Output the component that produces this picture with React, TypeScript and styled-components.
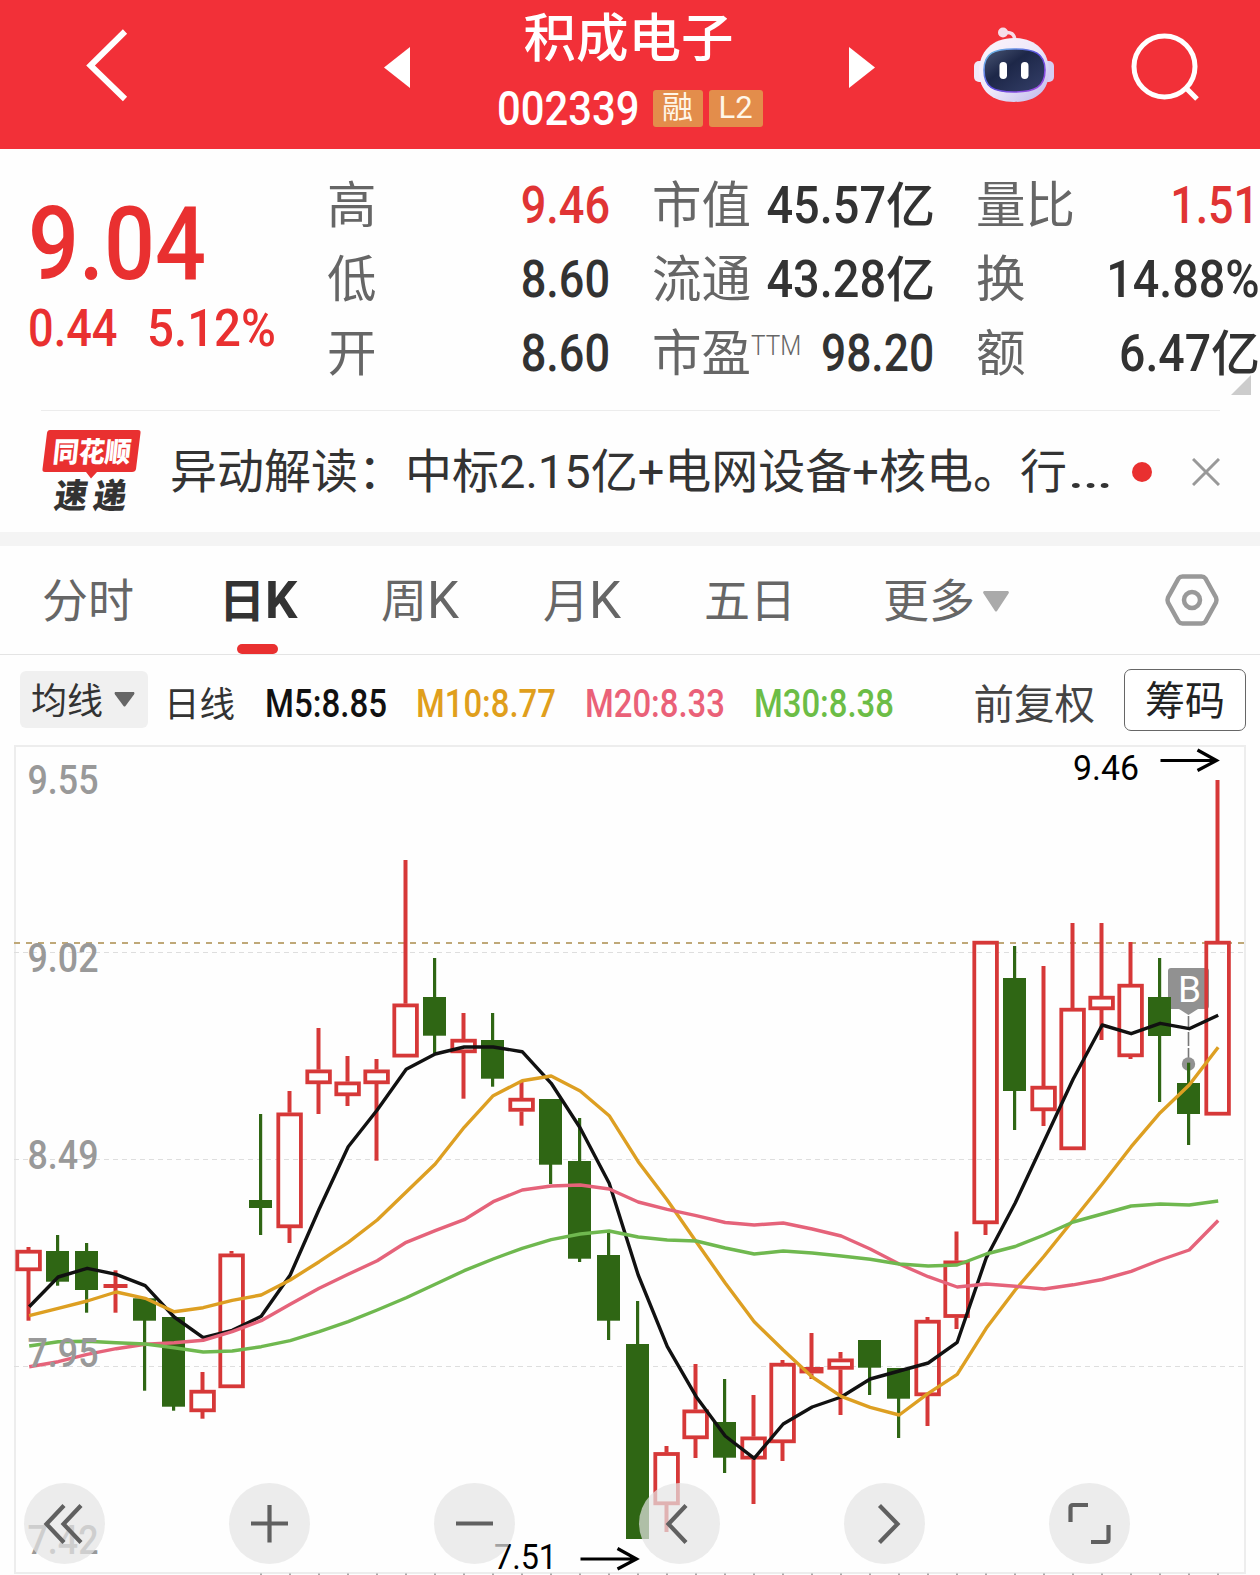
import React from "react";
import styled, { createGlobalStyle } from "styled-components";

const GlobalStyle = createGlobalStyle`
  * { box-sizing: border-box; }
  body { margin: 0; background: #fff; }
`;

const SANS = `Roboto, "Noto Sans CJK SC", sans-serif`;
const CJK = `"Noto Sans CJK SC", sans-serif`;

const Screen = styled.div`
  width: 1260px;
  height: 1575px;
  overflow: hidden;
  display: flex;
  flex-direction: column;
  background: #fefefe;
  font-family: ${SANS};
  color: #333;
  white-space: nowrap;
`;

/* Condensed figures, squeezed towards the side they are aligned to. */
const Figure = styled.span<{ $k?: number; $side?: string }>`
  display: inline-block;
  transform: scaleX(${(p) => p.$k ?? 0.93});
  transform-origin: ${(p) => p.$side ?? "left"} center;
`;

/* ---------- header ---------- */
const Header = styled.header`
  flex: none;
  height: 149px;
  background: #f23038;
  display: flex;
  align-items: flex-start;
  padding-left: 84px;
`;
const HeaderIcon = styled.svg<{ $top: number; $left?: number }>`
  flex: none;
  display: block;
  margin-top: ${(p) => p.$top}px;
  margin-left: ${(p) => p.$left ?? 0}px;
  overflow: visible;
`;
const TitleBlock = styled.div`
  width: 439px;
  display: flex;
  flex-direction: column;
  align-items: center;
  color: #fff;
`;
const StockName = styled.div`
  height: 75px;
  padding-right: 2px;
  font: 500 52.5px/69px ${CJK};
`;
const CodeRow = styled.div`
  display: flex;
  align-items: center;
  height: 67px;
  gap: 6px;
`;
const Code = styled.div`
  width: 150px;
  font-size: 48px;
  font-weight: 500;
  line-height: 68px;
`;
const Tag = styled.span<{ $w: number }>`
  width: ${(p) => p.$w}px;
  height: 37px;
  border-radius: 3px;
  background: #e38d4b;
  color: #fff6e8;
  font-size: 31px;
  line-height: 36px;
  text-align: center;
`;

/* ---------- quote ---------- */
const Quote = styled.section`
  flex: none;
  height: 261px;
  display: flex;
  position: relative;
`;
const PriceBlock = styled.div`
  width: 327px;
  padding: 35px 0 0 28px;
  color: #e93030;
`;
const Price = styled.div`
  font-size: 102px;
  font-weight: 500;
  line-height: 120px;
`;
const Change = styled.div`
  display: flex;
  font-size: 51px;
  font-weight: 500;
  line-height: 50px;
`;
const ChangeItem = styled.div<{ $w: number }>`
  width: ${(p) => p.$w}px;
`;
const StatColumn = styled.div<{ $w: number; $gap: number }>`
  width: ${(p) => p.$w}px;
  margin-right: ${(p) => p.$gap}px;
  padding-top: 20px;
`;
const StatRow = styled.div`
  display: flex;
  justify-content: space-between;
  height: 74px;
  line-height: 74px;
`;
const StatLabel = styled.span`
  display: flex;
  font-family: ${CJK};
  font-size: 49.5px;
  font-weight: 400;
  line-height: 66px;
  color: #666;
`;
const Sup = styled.sup`
  font-family: Roboto, sans-serif;
  font-size: 27px;
  font-weight: 300;
  line-height: 58px;
  vertical-align: top;
  width: 50px;
`;
const StatValue = styled.span<{ $red?: boolean; $shift?: number }>`
  display: flex;
  justify-content: flex-end;
  font-size: 51px;
  font-weight: 500;
  color: ${(p) => (p.$red ? "#e03434" : "#323232")};
  margin-right: ${(p) => p.$shift ?? 0}px;
`;
const Unit = styled.span`
  font: 500 49px/66px ${CJK};
`;
const Corner = styled.i`
  position: absolute;
  right: 9px;
  bottom: 15px;
  border-style: solid;
  border-width: 0 0 20px 20px;
  border-color: transparent transparent #ccc transparent;
`;

/* ---------- news ---------- */
const News = styled.section`
  flex: none;
  height: 122px;
  margin: 0 40px 0 41px;
  border-top: 1px solid #ececec;
  display: flex;
  align-items: center;
`;
const NewsLogo = styled.svg`
  flex: none;
  width: 129px;
  height: 84px;
  overflow: visible;
`;
const NewsText = styled.div`
  width: 962px;
  font-size: 47px;
  line-height: 70px;
  color: #333;
`;
const Dot = styled.i`
  width: 20px;
  height: 20px;
  border-radius: 50%;
  background: #e93030;
`;
const Close = styled.svg`
  margin-left: auto;
`;
const Band = styled.div`
  flex: none;
  height: 14px;
  background: #f4f4f4;
`;

/* ---------- tabs ---------- */
const Tabs = styled.nav`
  flex: none;
  height: 109px;
  border-bottom: 1px solid #e4e4e4;
  display: flex;
  padding-left: 42px;
`;
const Tab = styled.div<{ $w: number; $on?: boolean }>`
  width: ${(p) => p.$w}px;
  display: flex;
  flex-direction: column;
  font-size: 46px;
  font-weight: ${(p) => (p.$on ? 700 : 400)};
  line-height: 98px;
  color: ${(p) => (p.$on ? "#333" : "#666")};
`;
const TabLabel = styled.div`
  height: 98px;
  padding-top: 12px;
  display: flex;
  align-items: center;
`;
const Latin = styled.span`
  font-size: 51px;
`;
const MoreArrow = styled.svg`
  margin-left: 8px;
`;
const Underline = styled.i`
  width: 41px;
  height: 10px;
  margin-left: 18px;
  border-radius: 5px;
  background: #e93030;
`;
const Gear = styled.svg`
  margin-top: 27px;
`;

/* ---------- moving averages ---------- */
const MaBar = styled.section`
  flex: none;
  height: 90px;
  display: flex;
  align-items: center;
  padding: 0 14px 0 20px;
`;
const Select = styled.button`
  width: 128px;
  height: 57px;
  margin: 0 16px 1px 0;
  padding: 0 0 0 11px;
  border: 0;
  border-radius: 6px;
  background: #f0f0f0;
  display: flex;
  align-items: center;
  gap: 11px;
  color: #333;
`;
const SelectLabel = styled.span`
  height: 57px;
  font: 400 36px/54px ${CJK};
`;
const Period = styled.span`
  width: 101px;
  font: 400 35.5px/60px ${CJK};
  margin-top: 3px;
`;
const Ma = styled.span<{ $w: number; $c: string }>`
  width: ${(p) => p.$w}px;
  margin-top: 7px;
  font-size: 38px;
  font-weight: 500;
  line-height: 60px;
  color: ${(p) => p.$c};
`;
const Adjust = styled.span`
  margin: 4px 29px 0 auto;
  font: 400 40.5px/60px ${CJK};
  color: #444;
`;
const Chips = styled.button`
  width: 122px;
  height: 62px;
  padding: 0;
  border: 1.5px solid #666;
  border-radius: 7px;
  background: #fff;
  display: flex;
  justify-content: center;
  font: 400 40px/56px ${CJK};
  color: #222;
`;

/* ---------- chart ---------- */
const ChartBox = styled.section`
  flex: none;
  position: relative;
  height: 830px;
`;
const ChartSvg = styled.svg`
  display: block;
  font-family: Roboto, sans-serif;
`;
const Controls = styled.div`
  position: absolute;
  left: 24px;
  top: 738px;
  display: flex;
  gap: 124px;
`;
const Round = styled.button`
  width: 81px;
  height: 81px;
  padding: 0;
  border: 0;
  border-radius: 50%;
  background: rgba(228, 228, 228, 0.71);
`;

type Candle = [up: 0 | 1, high: number, top: number, bottom: number, low: number];

const candles: Candle[] = [
  [1, 1247, 1250, 1271, 1320.7], [0, 1235, 1251, 1281.7, 1285.7], [0, 1243, 1251, 1290, 1312.7],
  [1, 1270.3, 1284, 1288, 1312.7], [0, 1298.3, 1298.3, 1320.7, 1390.7], [0, 1317, 1317, 1406.7, 1410.7],
  [1, 1372, 1390, 1412, 1418.7], [1, 1251, 1253.7, 1388, 1388], [0, 1114, 1200, 1208, 1235],
  [1, 1091, 1112.7, 1228, 1243], [1, 1028, 1069.7, 1084, 1114], [1, 1056, 1081.7, 1096, 1106],
  [1, 1059, 1069.7, 1084, 1160.7], [1, 860, 1003.7, 1057.3, 1057.3], [0, 958, 997, 1035.7, 1053],
  [1, 1013, 1039, 1053, 1098.7], [0, 1013, 1040, 1078.7, 1086.7], [1, 1082, 1098, 1111.5, 1125.7],
  [0, 1099, 1099, 1164.7, 1184], [0, 1118, 1161, 1258.7, 1262], [0, 1232, 1255, 1320.7, 1340],
  [0, 1301, 1344, 1539, 1539], [1, 1446, 1452.3, 1505, 1532], [1, 1364, 1409.7, 1439, 1458],
  [0, 1379, 1422, 1457.7, 1473], [1, 1395, 1436.7, 1459.3, 1504], [1, 1360, 1363, 1443, 1461],
  [1, 1333, 1367, 1373.4, 1379], [1, 1352, 1358.7, 1369.5, 1415], [0, 1340, 1340, 1367.7, 1395],
  [0, 1368, 1368, 1398.7, 1438], [1, 1317, 1320, 1396, 1426], [1, 1231.5, 1260.7, 1317.7, 1329],
  [1, 941, 941, 1224, 1235], [0, 946, 978, 1091, 1130], [1, 966, 1086, 1111, 1126],
  [1, 923, 1008, 1150, 1150], [1, 923, 996, 1010, 1040], [1, 942, 984, 1057, 1059],
  [0, 958, 997, 1036, 1102], [0, 1062.7, 1083, 1114, 1145], [1, 780, 941, 1115.4, 1115.4],
];

const averages: { color: string; ys: number[] }[] = [
  { color: "#111", ys: [1306.7, 1277, 1268.3, 1274.3, 1285.7, 1317, 1337.7, 1330.3, 1316.3, 1275, 1209, 1146.7, 1110, 1069.3, 1054, 1047, 1047, 1051.7, 1083.3, 1128, 1183.3, 1275, 1346.3, 1396.7, 1436, 1458.3, 1424, 1407, 1397, 1379, 1371, 1363, 1342.3, 1258, 1203, 1141, 1079, 1025, 1033.7, 1023.3, 1028.7, 1015.3] },
  { color: "#dd9f22", ys: [1315.7, 1308.3, 1301, 1292, 1298.3, 1311.7, 1307.7, 1300.3, 1295, 1280, 1261.7, 1242.3, 1220, 1192, 1164, 1127.3, 1095.7, 1080.7, 1076, 1091, 1115.7, 1161.7, 1200, 1241.7, 1283, 1321.7, 1350, 1377, 1396.3, 1407.3, 1415, 1393.3, 1374.3, 1328.3, 1290, 1256, 1220, 1184, 1146.7, 1112.7, 1085, 1047.3] },
  { color: "#e5637a", ys: [1366.7, 1361.7, 1354.3, 1348.7, 1344.3, 1342.7, 1340.3, 1331.7, 1320.7, 1304.3, 1288.3, 1274.3, 1260.7, 1242.3, 1230.7, 1219.7, 1201.7, 1190, 1186, 1185, 1189, 1202, 1209.3, 1215.7, 1222.5, 1225, 1223, 1229, 1236, 1249, 1264, 1276.7, 1287, 1284, 1286.3, 1289, 1284.8, 1279.5, 1271.3, 1260, 1250, 1220.5] },
  { color: "#6fb84f", ys: [1346, 1341.7, 1341.3, 1342.7, 1344, 1347.7, 1352, 1351, 1346.7, 1340.7, 1331.7, 1321.7, 1310, 1297.7, 1284.3, 1270.7, 1259, 1248.3, 1239.7, 1234, 1231, 1237, 1240, 1241, 1248, 1254, 1251, 1253, 1256, 1259.3, 1264, 1266, 1265, 1254, 1246.5, 1235, 1222, 1214, 1206, 1204, 1205, 1201] },
];

const axis: [string, number][] = [["9.55", 794], ["9.02", 972], ["8.49", 1169], ["7.95", 1367], ["7.42", 1554]];
const slot = (i: number) => 28.5 + i * 29;

const CandleShape = ({ c, i }: { c: Candle; i: number }) => {
  const [up, high, top, bottom, low] = c;
  const x = slot(i);
  if (!up)
    return (
      <g fill="#2f6614">
        <rect x={x - 1.5} y={high} width="3.2" height={low - high} />
        <rect x={x - 11.5} y={top} width="23" height={bottom - top} />
      </g>
    );
  return (
    <g fill="#d63838">
      <rect x={x - 2} y={high} width="4" height={top - high} />
      <rect x={x - 2} y={bottom} width="4" height={low - bottom} />
      {bottom - top < 7 ? (
        <rect x={x - 12} y={top} width="24" height={bottom - top} />
      ) : (
        <rect x={x - 11.2} y={top + 1.7} width="22.6" height={bottom - top - 3.4} fill="none" stroke="#d63838" strokeWidth="3.8" />
      )}
    </g>
  );
};

const Chart = () => (
  <ChartSvg width="1260" height="830" viewBox="0 745 1260 830">
    <rect x="15" y="746" width="1230" height="827" fill="none" stroke="#ededed" strokeWidth="2" />
    {[952.5, 1159.5, 1366.5].map((y) => (
      <line key={y} x1="14" x2="1244" y1={y} y2={y} stroke="#dedede" strokeDasharray="5 4" />
    ))}
    <line x1="14" x2="1245" y1="943" y2="943" stroke="#bfa878" strokeWidth="2" strokeDasharray="6 6" />
    {candles.map((_, i) => i > 7 && (
      <rect key={i} x={slot(i) - 0.5} y="1573.5" width="2" height="2" fill="#aaa" />
    ))}
    <g fill="#919191">
      <rect x="1168" y="968" width="41" height="41" rx="3" />
      <path d="M1179 1009h19l-9.500 6z" />
      <path d="M1188.500 1016v48" stroke="#777" strokeWidth="1.600" strokeDasharray="14 2" />
      <circle cx="1188.500" cy="1064" r="6.700" />
    </g>
    {candles.map((c, i) => <CandleShape key={i} c={c} i={i} />)}
    <text x="1178" y="1001.500" fontSize="37" fill="#fff">B</text>
    {averages.map((a) => (
      <polyline
        key={a.color}
        points={a.ys.map((y, i) => `${slot(i) + 0.7},${y}`).join(" ")}
        fill="none"
        stroke={a.color}
        strokeWidth="3.4"
        strokeLinejoin="round"
      />
    ))}
    {axis.map(([t, y]) => (
      <text key={t} x="27.500" y={y} fontSize="40.500" fontWeight="500" fill="#999" textLength="71" lengthAdjust="spacingAndGlyphs">{t}</text>
    ))}
    <text x="1073" y="780" fontSize="35.500" fill="#000" textLength="66" lengthAdjust="spacingAndGlyphs">9.46</text>
    <text x="494" y="1569" fontSize="35.500" fill="#000" textLength="63" lengthAdjust="spacingAndGlyphs">7.51</text>
    <g fill="none" stroke="#000" strokeWidth="3.2">
      <path d="M1160.500 760.500h56M1197.500 750l19 10.500-19 10" />
      <path d="M580.500 1559h56M617.500 1548.500l19 10.500-19 10" />
    </g>
  </ChartSvg>
);

const controlPaths = [
  "M40 22.500L22.500 41L40 59.500M57 22.500L39.500 41L57 59.500",
  "M22 40.500H59M40.500 22V59.500",
  "M22 40.500H59",
  "M47 22.500L29.500 41L47 59.500",
  "M35.500 22.500L53.500 41L35.500 59.500",
  "M21.500 39V24.500Q21.500 22 24 22H39M42 59H57Q59.500 59 59.500 56.500V42",
];

const Robot = () => (
  <HeaderIcon $top={27} $left={98} width="82" height="77" viewBox="0 0 82 77">
    <defs>
      <linearGradient id="shell" x1="0" y1="0" x2="1" y2="1">
        <stop offset="0" stopColor="#fdf4fa" />
        <stop offset=".5" stopColor="#eee9fa" />
        <stop offset="1" stopColor="#bdb6ea" />
      </linearGradient>
      <linearGradient id="visor" x1="0" y1="0" x2="1" y2="1">
        <stop offset="0" stopColor="#4c5876" />
        <stop offset=".4" stopColor="#1d2748" />
        <stop offset="1" stopColor="#35406a" />
      </linearGradient>
      <linearGradient id="rim" x1="0" y1="0" x2="1" y2="1">
        <stop offset="0" stopColor="#70cce8" />
        <stop offset=".5" stopColor="#5a4de0" />
        <stop offset="1" stopColor="#a84ce0" />
      </linearGradient>
    </defs>
    <path d="M30 6Q42 3 42 15" fill="none" stroke="#f8dce8" strokeWidth="3.500" />
    <circle cx="30" cy="5.500" r="5" fill="#f6dde9" />
    <rect x="1" y="34" width="12" height="21" rx="5" fill="#f1e9f9" />
    <rect x="69" y="34" width="12" height="21" rx="5" fill="#d5cdf3" />
    <path d="M41 11C63 11 76 25 76 44C76 64 63 75 41 75C19 75 6 64 6 44C6 25 19 11 41 11Z" fill="url(#shell)" />
    <path d="M41 22C61 22 72 26 72 43C72 60 62 65 41 65C20 65 11 60 11 43C11 26 21 22 41 22Z" fill="url(#visor)" stroke="url(#rim)" strokeWidth="1.600" />
    <rect x="26.500" y="35" width="7.500" height="17" rx="3.700" fill="#fff" />
    <rect x="48" y="35" width="7.500" height="17" rx="3.700" fill="#fff" />
  </HeaderIcon>
);

export default function App() {
  return (
    <Screen>
      <GlobalStyle />
      <Header>
        <HeaderIcon $top={29} width="46" height="74" viewBox="0 0 46 74" fill="none" stroke="#fff" strokeWidth="6">
          <path d="M41 2.500L6.500 36.500L41 70" />
        </HeaderIcon>
        <HeaderIcon $top={47} $left={254} width="26" height="41" viewBox="0 0 26 41" fill="#fff">
          <path d="M26 0V41L0 20.500z" />
        </HeaderIcon>
        <TitleBlock>
          <StockName>积成电子</StockName>
          <CodeRow>
            <Code><Figure $k={0.87}>002339</Figure></Code>
            <Tag $w={50}>融</Tag>
            <Tag $w={54}>L2</Tag>
          </CodeRow>
        </TitleBlock>
        <HeaderIcon $top={47} width="26" height="41" viewBox="0 0 26 41" fill="#fff">
          <path d="M0 0V41L26 20.500z" />
        </HeaderIcon>
        <Robot />
        <HeaderIcon $top={33} $left={75} width="70" height="70" viewBox="0 0 70 70" fill="none" stroke="#fff" strokeWidth="5">
          <circle cx="34.500" cy="33.500" r="30.500" />
          <path d="M55 54L67 66" strokeWidth="5.200" />
        </HeaderIcon>
      </Header>

      <Quote>
        <PriceBlock>
          <Price><Figure $k={0.88}>9.04</Figure></Price>
          <Change>
            <ChangeItem $w={119}><Figure $k={0.885}>0.44</Figure></ChangeItem>
            <ChangeItem $w={130}><Figure>5.12%</Figure></ChangeItem>
          </Change>
        </PriceBlock>
        <StatColumn $w={283} $gap={42}>
          <StatRow><StatLabel>高</StatLabel><StatValue $red><Figure $k={0.885} $side="right">9.46</Figure></StatValue></StatRow>
          <StatRow><StatLabel>低</StatLabel><StatValue><Figure $k={0.885} $side="right">8.60</Figure></StatValue></StatRow>
          <StatRow><StatLabel>开</StatLabel><StatValue><Figure $k={0.885} $side="right">8.60</Figure></StatValue></StatRow>
        </StatColumn>
        <StatColumn $w={283} $gap={41}>
          <StatRow><StatLabel>市值</StatLabel><StatValue><Figure $k={0.92} $side="right">45.57</Figure><Unit>亿</Unit></StatValue></StatRow>
          <StatRow><StatLabel>流通</StatLabel><StatValue><Figure $k={0.92} $side="right">43.28</Figure><Unit>亿</Unit></StatValue></StatRow>
          <StatRow><StatLabel>市盈<Sup><Figure $k={0.9}>TTM</Figure></Sup></StatLabel><StatValue $shift={1}><Figure $k={0.87} $side="right">98.20</Figure></StatValue></StatRow>
        </StatColumn>
        <StatColumn $w={284} $gap={0}>
          <StatRow><StatLabel>量比</StatLabel><StatValue $red $shift={1}><Figure $k={0.88} $side="right">1.51</Figure></StatValue></StatRow>
          <StatRow><StatLabel>换</StatLabel><StatValue><Figure $k={0.915} $side="right">14.88%</Figure></StatValue></StatRow>
          <StatRow><StatLabel>额</StatLabel><StatValue><Figure $k={0.91} $side="right">6.47</Figure><Unit>亿</Unit></StatValue></StatRow>
        </StatColumn>
        <Corner />
      </Quote>

      <News>
        <NewsLogo viewBox="0 0 129 84">
          <path d="M9 0H97Q100 0 99.500 3L95 39Q94.500 42 91 42H56L50 48.500L45 42H4Q1 42 1.500 39L6 3Q6.500 0 9 0Z" fill="#e93030" />
          <g fontFamily={CJK} fontWeight="900">
            <text transform="translate(11 32) skewX(-6)" fontSize="28" textLength="78" lengthAdjust="spacingAndGlyphs" fill="#fff">同花顺</text>
            <text transform="translate(12 78) skewX(-8)" fontSize="34" textLength="33" lengthAdjust="spacingAndGlyphs" fill="#333">速</text>
            <text transform="translate(51 78) skewX(-8)" fontSize="34" textLength="33" lengthAdjust="spacingAndGlyphs" fill="#333">递</text>
          </g>
        </NewsLogo>
        <NewsText>异动解读：中标2.15亿+电网设备+核电。行<Figure $k={1.47}>…</Figure></NewsText>
        <Dot />
        <Close width="28" height="28" viewBox="0 0 28 28" stroke="#999" strokeWidth="3">
          <path d="M1 1L27 27M27 1L1 27" />
        </Close>
      </News>
      <Band />

      <Tabs>
        <Tab $w={177}><TabLabel>分时</TabLabel></Tab>
        <Tab $w={162} $on><TabLabel>日<Latin>K</Latin></TabLabel><Underline /></Tab>
        <Tab $w={162}><TabLabel>周<Latin>K</Latin></TabLabel></Tab>
        <Tab $w={161}><TabLabel>月<Latin>K</Latin></TabLabel></Tab>
        <Tab $w={179}><TabLabel>五日</TabLabel></Tab>
        <Tab $w={281}>
          <TabLabel>
            更多
            <MoreArrow width="26" height="21" viewBox="0 0 26 21" fill="#aaa"><path d="M1 0H25Q26.500 1 25.500 2.500L14 20Q13 21 12 20L.5 2.500Q-.5 1 1 0z" /></MoreArrow>
          </TabLabel>
        </Tab>
        <Gear width="56" height="54" viewBox="0 0 56 54" fill="none" stroke="#999" strokeWidth="4.500" strokeLinejoin="round">
          <path d="M18.500 3.500H37.500Q40 3.500 41.500 5.500L52 24.500Q53 27 52 29.500L41.500 48.500Q40 50.500 37.500 50.500H18.500Q16 50.500 14.500 48.500L4 29.500Q3 27 4 24.500L14.500 5.500Q16 3.500 18.500 3.500Z" />
          <circle cx="28" cy="27" r="8" />
        </Gear>
      </Tabs>

      <MaBar>
        <Select>
          <SelectLabel>均线</SelectLabel>
          <svg width="21" height="15" viewBox="0 0 21 15" fill="#666"><path d="M1 0H20Q21 1 20 2.500L11.500 14Q10.500 15 9.500 14L1 2.500Q0 1 1 0z" /></svg>
        </Select>
        <Period>日线</Period>
        <Ma $w={151} $c="#111"><Figure $k={0.87}>M5:8.85</Figure></Ma>
        <Ma $w={169} $c="#e09f1c"><Figure $k={0.865}>M10:8.77</Figure></Ma>
        <Ma $w={169} $c="#ea6178"><Figure $k={0.865}>M20:8.33</Figure></Ma>
        <Ma $w={145} $c="#6cbd46"><Figure $k={0.865}>M30:8.38</Figure></Ma>
        <Adjust>前复权</Adjust>
        <Chips>筹码</Chips>
      </MaBar>

      <ChartBox>
        <Chart />
        <Controls>
          {controlPaths.map((d) => (
            <Round key={d}>
              <svg width="81" height="81" viewBox="0 0 81 81" fill="none" stroke="#606060" strokeWidth="4.200"><path d={d} /></svg>
            </Round>
          ))}
        </Controls>
      </ChartBox>
    </Screen>
  );
}
